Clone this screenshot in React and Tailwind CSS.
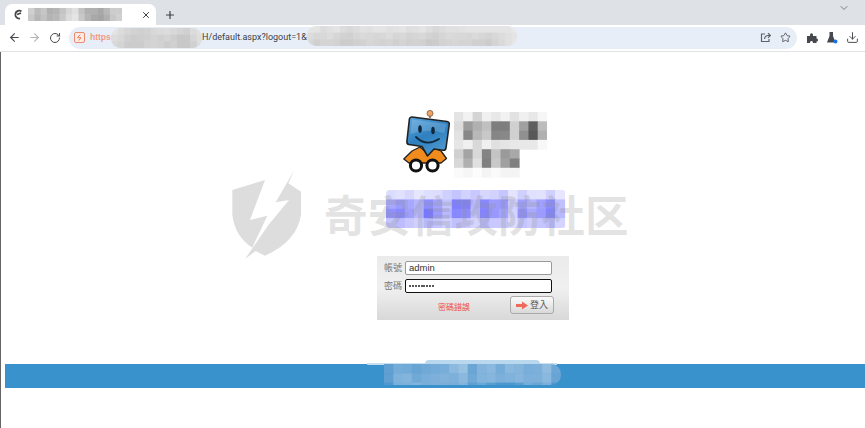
import React from "react";
import { ArrowLeft, ArrowRight, RotateCw, X, Plus, ChevronDown, Star, Download } from "lucide-react";

function Mosaic({ rows, cell, width, height, className }) {
  return (
    <svg width={width} height={height} viewBox={`0 0 ${width} ${height}`} className={className}>
      <defs>
        <filter id="soft" x="-5%" y="-5%" width="110%" height="110%">
          <feGaussianBlur stdDeviation="0.6" />
        </filter>
      </defs>
      <g filter="url(#soft)">
        {rows.map((r, y) =>
          r.map((c, x) =>
            c ? <rect key={`${x}-${y}`} x={x * cell} y={y * cell} width={cell + 0.5} height={cell + 0.5} fill={c} /> : null
          )
        )}
      </g>
    </svg>
  );
}

const g = (s) => s.split(" ").map((v) => (v === "--" ? null : `#${v}${v}${v}`));
const tabRows = [g("d0 bb c6 b0 b4 c4 d6 e0 c2 b0 b0 a8 b8 cc cc"), g("c8 b6 c2 b4 b8 c8 dc e4 c8 b4 a8 a4 b0 c8 d0")];
const urlA = [
  g("e4 dc d6 d2 d0 d2 d8 da dc d8 d4 d0 dc e0"),
  g("dc d8 d0 cc ce d0 d4 d0 d4 ce c8 c8 d6 de"),
  g("d8 d4 cc cc cc d2 d4 d2 cc d0 c8 c8 d0 dc"),
];
const urlB = [
  g("e4 e4 dc e0 e4 dc d8 dc e2 e0 e4 e4 e0 e2 e4 de e0 e4 de d8 dc e0 e0 e2 e4 e4 e4 e4 e4 e4 e4 e8"),
  g("dc d8 d8 dc d6 d2 d0 d6 da d8 d6 d8 dc d6 d8 d4 d6 d8 d2 d0 d6 da d8 d8 d6 da d6 d4 d8 dc e0 e4"),
  g("d8 d0 d4 d4 d2 cc cc d0 d2 d6 d4 d2 d4 d0 d4 d0 d2 d0 ca cc d2 d4 d6 d4 d4 d0 d0 cc d4 da e0 e6"),
];
const logoRows = [
  g("e4 f2 d4 f0 e8 f2 e2 f0 e8 f6"),
  g("dc 9c b0 c0 7e 7e d0 a0 5e bc"),
  g("e2 88 b8 c8 86 88 d0 90 58 b0"),
  g("e6 f0 d8 f0 e0 e4 e8 e8 e8 f8"),
  g("d0 a4 d8 84 c4 9a a8 -- -- --"),
  g("d8 b0 e0 80 c8 a0 80 -- -- --"),
  g("fa f6 fc f4 fa f4 f4 -- -- --"),
];
const bannerRows = [
  ["#dcdcff","#e0e0ff","#d8d8ff","#e6e6ff","#dedeff","#dcdcff","#d0d0ff","#c4c4ff","#d2d2ff","#c8c8ff","#d6d6ff","#d2d2ff","#c6c6ff","#e4e4ff","#d0d0ff","#e0e0ff","#e2e2ff","#d0d0ff","#e6e6ff"],
  ["#a8a8ff","#9a9aff","#a8a8ff","#b4b4ff","#8e8eff","#a4a4ff","#c4c4ff","#8080ff","#8080ff","#b8b8ff","#8888ff","#9c9cff","#9898ff","#d0d0ff","#a0a0ff","#b4b4ff","#a0a0ff","#8c8cff","#c0c0ff"],
  ["#9090ff","#8888ff","#a0a0ff","#b8b8ff","#7878ff","#9c9cff","#b8b8ff","#8888ff","#8c8cff","#c0c0ff","#8484ff","#9898ff","#a4a4ff","#d4d4ff","#9090ff","#a8a8ff","#9c9cff","#8484ff","#b8b8ff"],
  ["#c4c4ff","#bcbcff","#c8c8ff","#d0d0ff","#b8b8ff","#c4c4ff","#d0d0ff","#c0c0ff","#c8c8ff","#d4d4ff","#bcbcff","#c8c8ff","#c8c8ff","#dcdcff","#c4c4ff","#ccccff","#c4c4ff","#bcbcff","#d4d4ff"],
];
const bandRows = [
  ["#5f9fd2","#74acd8","#72aad8","#68a4d4","#70a9d6","#74abd8","#78aed9","#8db9df","#98c1e2","#6aa5d4","#84b4dc","#8ab8de","#74acd8","#8ab8de","#86b5dc","#78aed9","#7cb0da","#90bce0","#6ca7d5"],
  ["#5f9fd2","#7eb2da","#82b4dc","#70a9d6","#78aed9","#7cb0da","#80b2db","#7eb1da","#8ab8de","#70a9d6","#82b4dc","#86b6dd","#7cb0da","#80b2db","#86b6dd","#7cb0da","#7eb1da","#8ab8de","#68a4d4"],
  ["#4f98cf","#7cb0da","#7eb1da","#84b4dc","#78aed9","#7cb0da","#7cb0da","#78aed9","#84b4dc","#5fa0d2","#6ca7d5","#5a9dd1","#4d97ce","#4d97ce","#5a9dd1","#74acd8","#6aa5d4","#7cb0da","#4f98cf"],
];

function Logo() {
  return (
    <svg width="48" height="63" viewBox="0 0 48 63" className="shrink-0">
      <defs>
        <linearGradient id="face" x1="0" y1="0" x2="0.6" y2="1">
          <stop offset="0" stopColor="#5aa6de" />
          <stop offset="0.55" stopColor="#2f80bf" />
          <stop offset="1" stopColor="#4b97cf" />
        </linearGradient>
      </defs>
      <path d="M27 4v4" stroke="#5b5b5b" strokeWidth="1.5" />
      <circle cx="27" cy="3.4" r="3" fill="#f0a468" stroke="#6b4a30" strokeWidth="0.7" />
      <path d="M0.8 49 L9 41 L17 37 L24 43 L31 38 L38 41 L43.5 48.5 L38 53 L6 53 Z" fill="#f08c1e" stroke="#222" strokeWidth="1.3" strokeLinejoin="round" />
      <path d="M9 7 L44 11.5 Q46.5 12 46.3 14 L43 38 Q42.5 40.5 40 40.2 L31 39 L24.5 46 L19 36.5 L6 34.5 Q3.6 34 3.9 31.5 L6.4 9 Q6.8 6.8 9 7 Z" fill="url(#face)" stroke="#222" strokeWidth="1.6" strokeLinejoin="round" />
      <path d="M9 9.5 L43.5 14 L41 23 Q24 18 7.5 24 Z" fill="#ffffff" opacity="0.16" />
      <ellipse cx="17" cy="19" rx="1.8" ry="3.8" fill="#10283c" />
      <ellipse cx="30" cy="20.5" rx="1.8" ry="3.8" fill="#10283c" />
      <path d="M13 27 Q23 37 36 29" stroke="#10283c" strokeWidth="1.8" fill="none" strokeLinecap="round" />
      <circle cx="13" cy="55.5" r="5.6" fill="#fff" stroke="#111" strokeWidth="3" />
      <circle cx="29.5" cy="55.5" r="5.6" fill="#fff" stroke="#111" strokeWidth="3" />
    </svg>
  );
}

function Shield() {
  return (
    <svg width="85" height="100" viewBox="0 0 255 300" className="absolute left-[225px] top-[165px]">
      <g fill="#8f8f8f" fillOpacity="0.3">
        <path d="M22 75 L120 45 L75 165 L127 152 L82 248 Q30 215 22 150 Z" />
        <path d="M208 15 L190 55 L228 80 L228 150 Q215 230 120 272 L92 258 L60 282 L130 180 L192 105 L152 112 Z" />
      </g>
    </svg>
  );
}

function IconBtn({ children, className }) {
  return <div className={`flex items-center justify-center ${className}`}>{children}</div>;
}

export default function App() {
  return (
    <div className="relative h-[428px] w-[865px] overflow-hidden bg-white font-['Liberation_Sans','Noto_Sans_CJK_TC',sans-serif]">
      {/* tab strip */}
      <div className="flex h-[25px] bg-[#dee1e6] pl-[5px] pt-[4px]">
        <div className="flex h-[21px] w-[151px] items-center rounded-t-[7px] bg-white pl-[8px]">
          <svg width="10" height="11" viewBox="0 0 10 11" className="shrink-0">
            <path d="M8.5 2.2 A4 4 0 1 0 7 9.5 M4 5.5 L8 4" stroke="#444" strokeWidth="1.7" fill="none" />
          </svg>
          <Mosaic rows={tabRows} cell={6.3} width={94} height={13} className="ml-[5px] shrink-0" />
          <X size={10} strokeWidth={2.4} className="ml-[19px] shrink-0 text-[#3c4043]" />
        </div>
        <IconBtn className="ml-[8px] h-[21px] w-[12px]">
          <Plus size={12} strokeWidth={2.4} className="text-[#3c4043]" />
        </IconBtn>
        <ChevronDown size={12} strokeWidth={1.6} className="ml-auto mr-[15px] mt-[-2px] text-[#5f6368]" />
      </div>
      {/* toolbar */}
      <div className="flex h-[27px] items-center border-b border-[#e2e3e6] bg-white pl-[8px] pb-[1px]">
        <ArrowLeft size={13} strokeWidth={2} className="text-[#45484c]" />
        <ArrowRight size={13} strokeWidth={2} className="ml-[7px] text-[#b2b4b7]" />
        <RotateCw size={12} strokeWidth={2} className="ml-[8px] text-[#45484c]" />
        <div className="relative ml-[8px] flex h-[22px] w-[728px] items-center rounded-full bg-[#e8eef8] pl-[5px]">
          <div className="flex h-[11px] w-[11px] shrink-0 items-center justify-center rounded-[2px] border border-[#ee8a6c] bg-[#fdece6]">
            <svg width="7" height="7" viewBox="0 0 7 7">
              <path d="M4.2 0.5 L1.5 3.8 H5 L2.8 6.5" stroke="#ee7a58" strokeWidth="1" fill="none" />
            </svg>
          </div>
          <span className="ml-[5px] w-[22px] shrink-0 text-[8.5px] font-bold text-[#f09a80]">https</span>
          <Mosaic rows={urlA} cell={6.6} width={91} height={20} className="ml-[-1px] shrink-0 rounded-[9px]" />
          <span className="w-[105px] shrink-0 whitespace-nowrap font-['Roboto',sans-serif] text-[9px] text-[#3c4043]">H/default.aspx?logout=1&amp;</span>
          <Mosaic rows={urlB} cell={6.6} width={210} height={20} className="mt-[-3px] shrink-0 rounded-[9px]" />
          <div className="ml-auto flex items-center pr-[4px]">
            <svg width="11" height="11" viewBox="0 0 11 11" fill="none" stroke="#5f6368" strokeWidth="1.2">
              <path d="M5 2 H1.5 V9.5 H9 V7" />
              <path d="M4.5 7 Q5 3.5 8 3.5 H10 M8 1.2 L10.3 3.5 L8 5.8" />
            </svg>
            <Star size={11} strokeWidth={1.8} className="ml-[9px] mr-[2px] text-[#45484c]" />
          </div>
        </div>
        <svg width="12" height="12" viewBox="0 0 12 12" className="ml-[9px]">
          <path d="M1 4 H4 Q3.8 1.2 5.5 1.2 Q7.2 1.2 7 4 H10.5 V6.5 Q12 6.3 12 8 Q12 9.6 10.5 9.5 V11 H7 Q7.2 9 5.5 9 Q3.8 9 4 11 H1 Z" fill="#45484c" />
        </svg>
        <svg width="12" height="13" viewBox="0 0 12 13" className="ml-[8px]">
          <path d="M3.5 1 H7 V5 L9.5 11.5 H1 L3.5 5 Z" fill="#45484c" />
          <circle cx="9.5" cy="10.5" r="2" fill="#1a73e8" />
        </svg>
        <Download size={13} strokeWidth={1.8} className="ml-[8px] text-[#45484c]" />
      </div>
      {/* page */}
      <div className="flex h-[376px] flex-col border-l border-[#666]">
        <div className="ml-[402px] mt-[58px] flex h-[68px] items-start">
          <Logo />
          <Mosaic rows={logoRows} cell={9.3} width={93} height={66} className="ml-[3px] mt-[2px]" />
        </div>
        <Mosaic rows={bannerRows} cell={9.4} width={180} height={38} className="ml-[385px] mt-[12px] rounded-[4px]" />
        <form className="ml-[376px] mt-[28px] flex h-[64px] w-[192px] flex-col bg-gradient-to-b from-[#ebebeb] via-[#f0f0f0] to-[#d8d8d8] pl-[7px] pr-[17px] pt-[5px]">
          <div className="flex h-[14px] items-center">
            <span className="w-[21px] text-[9px] leading-none text-[#777]">帳號</span>
            <div className="flex h-[14px] flex-1 items-center rounded-[2px] border border-[#9a9a9a] bg-white pl-[3px] text-[9.5px] text-[#333]">admin</div>
          </div>
          <div className="mt-[4px] flex h-[14px] items-center">
            <span className="w-[21px] text-[9px] leading-none text-[#777]">密碼</span>
            <div className="flex h-[14px] flex-1 items-center gap-[0.9px] rounded-[2px] border-[1.5px] border-[#111] bg-white pl-[3px]">
              {Array.from({ length: 9 }).map((_, i) => (
                <span key={i} className="h-[2px] w-[2px] rounded-full bg-[#222]" />
              ))}
            </div>
          </div>
          <div className="mt-[3px] flex w-[170px] items-start">
            <span className="ml-[54px] mt-[8px] w-[32px] shrink-0 whitespace-nowrap text-[8px] leading-none text-[#f04a4a]">密碼錯誤</span>
            <div className="ml-[40px] flex h-[18px] w-[44px] shrink-0 items-center justify-center gap-[2px] rounded-[3px] border border-[#aaa] bg-gradient-to-b from-[#fbfbfb] to-[#d9d9d9] text-[9px] leading-none text-[#555]">
              <svg width="12" height="9" viewBox="0 0 12 9">
                <path d="M0 3 H6 V0.5 L12 4.5 L6 8.5 V6 H0 Z" fill="#ee6a5a" />
              </svg>
              <span>登入</span>
            </div>
          </div>
        </form>
        <div className="relative ml-[4px] mt-[44px] h-[24px] bg-[#3a92cc]">
          <div className="absolute left-[362px] top-[-1px] h-[2px] w-[190px] rounded-l-full bg-[#c7dff0]" />
          <div className="absolute left-[420px] top-[-4px] h-[4px] w-[115px] rounded-t-[8px] bg-[#b9d8ee]" />
          <Mosaic rows={bandRows} cell={9.3} width={177} height={21} className="absolute left-[379px] top-0 rounded-r-[10px]" />
        </div>
      </div>
      {/* watermark */}
      <Shield />
      <div className="absolute left-[324px] top-[190px] whitespace-nowrap font-['Noto_Sans_CJK_SC',sans-serif] text-[43.5px] font-bold leading-[48px] text-[#8f8f8f]/25">
        奇安信攻防社区
      </div>
    </div>
  );
}
